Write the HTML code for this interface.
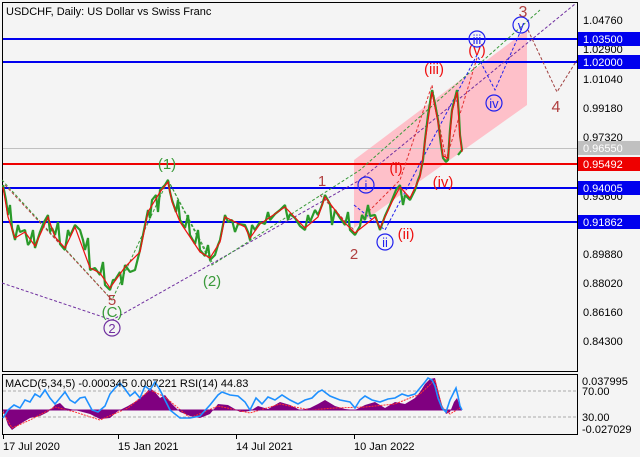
<!DOCTYPE html>
<html><head><meta charset="utf-8"><style>
body{margin:0;background:#fff;}
svg{display:block;font-family:"Liberation Sans","DejaVu Sans",sans-serif;}
</style></head><body>
<svg width="640" height="457" viewBox="0 0 640 457" xmlns="http://www.w3.org/2000/svg">
<rect width="640" height="457" fill="#f4f4f4"/>
<rect x="2.5" y="2.5" width="575" height="369" fill="#f4f4f4" stroke="#000" stroke-width="1"/>
<polygon points="354,160 527,30 527,105 354,228" fill="#ffb6c1" opacity="0.85"/>
<line x1="3" y1="148.5" x2="577" y2="148.5" stroke="#c0c0c0"/>
<line x1="3" y1="39" x2="577" y2="39" stroke="#0000ee" stroke-width="2"/>
<line x1="3" y1="62" x2="577" y2="62" stroke="#0000ee" stroke-width="2"/>
<line x1="3" y1="164" x2="577" y2="164" stroke="#ee0000" stroke-width="2"/>
<line x1="3" y1="188" x2="577" y2="188" stroke="#0000ee" stroke-width="2"/>
<line x1="3" y1="222" x2="577" y2="222" stroke="#0000ee" stroke-width="2"/>
<g fill="none" stroke-width="1" stroke-dasharray="3,2">
<polyline points="2,283 112,320 360,180 575,4" stroke="#7030a0"/>
<polyline points="2,180 112,300 168,180 212,265 360,170 540,10" stroke="#3a9a3a"/>
<polyline points="5,185 112,300" stroke="#b04040"/>
<polyline points="168,180 212,262" stroke="#3a9a3a"/>
<polyline points="354,205 385,230 477,55 495,90 522,28" stroke="#2020ee"/>
<polyline points="365,215 400,180 432,85 446,160 477,58" stroke="#e03030"/>
<polyline points="320,195 354,230" stroke="#b04040"/>
<polyline points="528,30 557,92 577,60" stroke="#a04040"/>
</g>
<polyline fill="none" stroke="#2a9a2a" stroke-width="2.2" stroke-linejoin="bevel" points="3,185 6,200 8,215 10,205 12,228 15,240 18,225 20,232 25,230 28,245 30,242 33,230 35,248 40,232 44,222 48,215 50,232 52,228 55,235 58,222 60,244 65,250 68,230 70,236 75,225 80,230 83,240 85,250 88,238 90,270 95,268 100,275 103,262 105,285 110,290 113,280 115,280 120,272 122,285 125,265 130,272 135,270 138,258 140,250 145,225 148,210 150,218 152,200 156,195 158,212 160,190 165,185 168,180 170,192 172,200 176,212 178,200 180,220 185,228 188,215 190,235 195,244 198,230 200,250 205,256 208,245 210,260 215,255 218,245 220,240 223,225 225,215 228,222 232,220 235,232 238,224 245,225 248,232 250,240 252,225 255,230 260,222 265,224 268,212 270,220 275,214 280,210 285,205 288,220 290,214 295,218 300,226 305,230 308,215 310,222 315,210 318,215 322,205 325,195 330,204 332,225 335,210 340,218 345,225 348,212 350,230 355,235 360,226 362,215 365,220 368,205 370,216 375,215 378,224 380,230 385,216 390,205 392,200 396,190 400,185 403,205 405,195 410,200 413,194 415,190 418,180 420,175 423,160 425,140 428,115 432,90 435,104 438,120 441,145 443,158 446,162 448,160 450,130 452,110 455,98 457,90 459,115 460,135 462,150 458,155"/>
<polyline fill="none" stroke="#ee1111" stroke-width="1.2" points="3,187 8,217 15,238 25,232 35,246 48,217 55,237 65,248 75,227 90,268 100,273 110,288 125,267 140,252 148,212 160,192 168,182 172,202 180,222 200,252 210,258 220,242 225,217 245,227 250,238 260,224 285,207 305,228 318,217 325,197 345,223 355,233 375,217 380,228 392,202 400,187 410,198 420,177 425,142 432,92 438,122 443,156 448,158 452,112 457,92 460,137 462,152"/>
<line x1="577.5" y1="2" x2="577.5" y2="372" stroke="#000"/>
<g font-size="11" fill="#000">
<text x="583" y="24">1.04760</text>
<text x="583" y="53">1.02900</text>
<text x="583" y="83">1.01040</text>
<text x="583" y="112">0.99180</text>
<text x="583" y="141">0.97320</text>
<text x="583" y="200">0.93600</text>
<text x="583" y="258">0.89880</text>
<text x="583" y="287">0.88020</text>
<text x="583" y="316">0.86160</text>
<text x="583" y="345">0.84300</text>
</g>
<g font-size="11">
<rect x="578" y="32" width="62" height="14" fill="#0000ee"/><text x="583" y="43" fill="#fff">1.03500</text>
<rect x="578" y="55" width="62" height="14" fill="#0000ee"/><text x="583" y="66" fill="#fff">1.02000</text>
<rect x="578" y="141" width="62" height="14" fill="#c0c0c0"/><text x="583" y="152" fill="#fff">0.96550</text>
<rect x="578" y="157" width="62" height="14" fill="#ee0000"/><text x="583" y="168" fill="#fff">0.95492</text>
<rect x="578" y="181" width="62" height="14" fill="#0000ee"/><text x="583" y="192" fill="#fff">0.94005</text>
<rect x="578" y="215" width="62" height="14" fill="#0000ee"/><text x="583" y="226" fill="#fff">0.91862</text>
</g>
<text x="6" y="15" font-size="11" fill="#000">USDCHF, Daily:  US Dollar vs Swiss Franc</text>
<g font-size="15" text-anchor="middle">
<text x="167" y="169" fill="#3a9a3a">(1)</text>
<text x="212" y="286" fill="#3a9a3a">(2)</text>
<text x="112" y="317" fill="#3a9a3a">(C)</text>
<text x="112" y="305" fill="#b04040">5</text>
<text x="322" y="186" fill="#b04040">1</text>
<text x="354" y="259" fill="#b04040">2</text>
<text x="523" y="17" fill="#b04040" font-size="16">3</text>
<text x="556" y="112" fill="#b04040" font-size="16">4</text>
<text x="396" y="173" fill="#ee1111">(i)</text>
<text x="406" y="239" fill="#ee1111">(ii)</text>
<text x="434" y="74" fill="#ee1111">(iii)</text>
<text x="443" y="187" fill="#ee1111">(iv)</text>
<text x="477" y="55" fill="#ee1111">(v)</text>
</g>
<g fill="none" stroke-width="1.2">
<circle cx="112" cy="328" r="8" stroke="#7030a0"/>
<circle cx="366" cy="185" r="8" stroke="#2020ee"/>
<circle cx="385" cy="242" r="8" stroke="#2020ee"/>
<circle cx="477" cy="39" r="8" stroke="#2020ee"/>
<circle cx="494" cy="103" r="8" stroke="#2020ee"/>
<circle cx="521" cy="25" r="8" stroke="#2020ee"/>
</g>
<g font-size="13" text-anchor="middle">
<text x="112" y="333" fill="#7030a0">2</text>
<text x="366" y="190" fill="#2020ee">i</text>
<text x="385" y="247" fill="#2020ee">ii</text>
<text x="477" y="44" fill="#2020ee">iii</text>
<text x="494" y="108" fill="#2020ee">iv</text>
<text x="521" y="30" fill="#2020ee">v</text>
</g>
<rect x="2.5" y="374.5" width="575" height="60" fill="#f4f4f4" stroke="#000"/>
<line x1="3" y1="391" x2="577" y2="391" stroke="#aaa" stroke-dasharray="3,2"/>
<line x1="3" y1="417" x2="577" y2="417" stroke="#aaa" stroke-dasharray="3,2"/>
<path fill="#800080" d="M3,410 L8,425 L12,430 L20,424 L30,418 L40,416 L48,412 L55,405 L60,403 L65,408 L75,410 L90,414 L100,419 L110,418 L118,411 L128,406 L138,400 L145,394 L150,388 L155,392 L160,398 L165,395 L172,404 L180,412 L190,416 L200,418 L210,414 L218,404 L228,405 L240,412 L250,411 L258,406 L268,409 L280,402 L290,405 L300,410 L310,408 L318,404 L325,400 L335,406 L345,409 L355,410 L365,405 L375,402 L385,408 L395,402 L405,404 L415,398 L420,392 L425,384 L430,379 L435,378 L438,390 L442,405 L446,414 L450,412 L454,402 L457,398 L460,406 L462,410 L3,410 Z"/>
<polyline fill="none" stroke="#ff3030" stroke-width="1" stroke-dasharray="2,1" points="3,412 12,428 30,420 55,407 75,412 100,420 128,408 150,390 165,397 190,418 218,406 250,413 280,404 310,410 335,408 365,407 395,404 420,394 435,380 442,407 450,414 460,408"/>
<line x1="3" y1="410" x2="462" y2="410" stroke="#800080"/>
<polyline fill="none" stroke="#1e90ff" stroke-width="1.6" points="3,418 8,410 14,405 20,408 25,400 30,402 35,394 40,397 45,390 50,398 55,404 60,398 65,392 70,400 75,403 80,398 85,397 92,410 98,412 105,406 110,394 115,388 120,383 125,389 130,396 135,392 140,398 145,386 150,390 155,382 160,390 165,400 170,410 175,414 180,418 190,418 200,416 210,405 218,395 222,392 230,395 238,396 245,402 250,410 256,398 262,404 268,397 275,400 282,395 290,400 298,404 305,400 312,398 318,392 322,390 330,396 340,400 350,402 355,408 360,400 365,396 372,400 380,402 388,399 395,398 402,394 408,396 415,394 420,388 425,382 428,378 432,380 435,386 438,398 442,408 446,412 450,400 454,392 456,388 458,396 460,406 462,410"/>
<line x1="577.5" y1="374" x2="577.5" y2="435" stroke="#000"/>
<g font-size="11" fill="#000">
<text x="5" y="387">MACD(5,34,5) -0.000345 0.007221 RSI(14) 44.83</text>
<text x="582" y="385">0.037995</text>
<text x="582" y="395">70.00</text>
<text x="582" y="421">30.00</text>
<text x="582" y="433">-0.027029</text>
<text x="3" y="450">17 Jul 2020</text>
<text x="118" y="450">15 Jan 2021</text>
<text x="236" y="450">14 Jul 2021</text>
<text x="354" y="450">10 Jan 2022</text>
</g>
<g stroke="#000"><line x1="3.5" y1="435" x2="3.5" y2="439"/><line x1="118.5" y1="435" x2="118.5" y2="439"/><line x1="236.5" y1="435" x2="236.5" y2="439"/><line x1="354.5" y1="435" x2="354.5" y2="439"/></g>
</svg>
</body></html>
